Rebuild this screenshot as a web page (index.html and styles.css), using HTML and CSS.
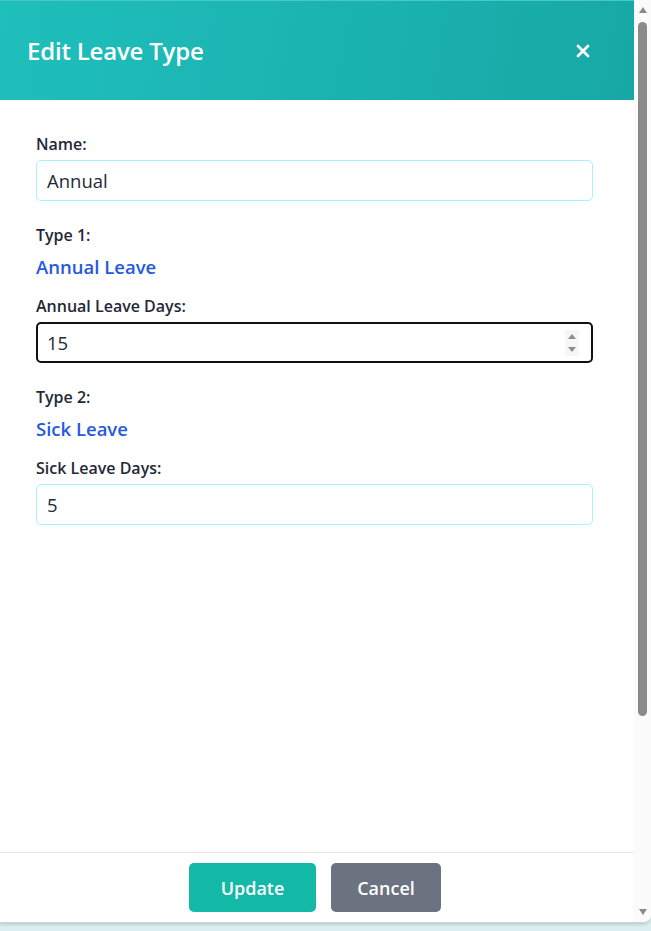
FILE: index.html
```html
<!DOCTYPE html>
<html lang="en">
<head>
<meta charset="utf-8">
<title>Edit Leave Type</title>
<link rel="stylesheet" href="styles.css">
</head>
<body>
<div class="modal">
  <div class="modal-main">
    <div class="modal-header">
      <h2 class="modal-title">Edit Leave Type</h2>
      <button class="close-btn" aria-label="Close">
        <svg width="14" height="14" viewBox="0 0 14 14"><path d="M2 2 L12 12 M12 2 L2 12" stroke="#fff" stroke-width="2.8" stroke-linecap="round"/></svg>
      </button>
    </div>
    <div class="modal-body">
      <div class="group">
        <label class="label">Name:</label>
        <input class="input" type="text" value="Annual">
      </div>
      <div class="group">
        <div class="label label-type">Type 1:</div>
        <div class="type-name">Annual Leave</div>
        <label class="label">Annual Leave Days:</label>
        <div class="input-wrap">
          <input class="input input-focused" type="text" value="15">
          <span class="spinner"><span class="tri-up"></span><span class="tri-down"></span></span>
        </div>
      </div>
      <div class="group">
        <div class="label label-type">Type 2:</div>
        <div class="type-name">Sick Leave</div>
        <label class="label">Sick Leave Days:</label>
        <input class="input" type="text" value="5">
      </div>
    </div>
    <div class="modal-footer">
      <button class="btn btn-update">Update</button>
      <button class="btn btn-cancel">Cancel</button>
    </div>
  </div>
  <div class="scrollbar" aria-hidden="true">
    <div class="sb-btn"><span class="sb-up"></span></div>
    <div class="sb-thumb"></div>
    <div class="sb-track"></div>
    <div class="sb-btn sb-btn-down"><span class="sb-down"></span></div>
  </div>
</div>
</body>
</html>
```

FILE: styles.css
```css
html, body {
  margin: 0;
  padding: 0;
}
body {
  background: #d9eff0;
  height: 931px;
  overflow: hidden;
  font-family: "Open Sans", "Noto Sans", sans-serif;
}
.modal {
  width: 651px;
  height: 923px;
  box-sizing: border-box;
  background: #fff;
  display: flex;
  overflow: hidden;
  border-bottom: 1px solid #d0d0d0;
  border-bottom-right-radius: 8px;
  box-shadow: 0 2px 3px rgba(0,0,0,0.12);
}
.modal-main {
  flex: 1;
  display: flex;
  flex-direction: column;
  min-width: 0;
}
.modal-header {
  height: 100px;
  flex: none;
  box-sizing: border-box;
  display: flex;
  align-items: center;
  justify-content: space-between;
  padding: 0 42px 0 27px;
  background: linear-gradient(100deg, #1fbfbc 0%, #17a8a5 100%);
  border-top: 1px solid #45c9c6;
}
.modal-title {
  margin: 0;
  color: #fff;
  font-size: 24px;
  font-weight: 600;
  letter-spacing: -0.2px;
}
.close-btn {
  background: none;
  border: 0;
  padding: 2px;
  display: flex;
  cursor: pointer;
}
.modal-body {
  flex: 1;
  box-sizing: border-box;
  padding: 32px 41px 0 36px;
}
.group + .group {
  margin-top: 22px;
}
.label {
  display: block;
  font-size: 16px;
  line-height: 24px;
  font-weight: 600;
  color: #1f2937;
  margin-bottom: 4px;
}
.label-type {
  margin-bottom: 6px;
}
.type-name {
  font-size: 18.5px;
  line-height: 28px;
  font-weight: 600;
  color: #2459e0;
  margin-bottom: 13px;
}
.input-wrap {
  position: relative;
}
.input {
  display: block;
  width: 100%;
  height: 41px;
  box-sizing: border-box;
  border: 1px solid #a5f3fc;
  border-radius: 5px;
  padding: 0 10px;
  font-family: inherit;
  font-size: 18.5px;
  color: #1f2937;
  background: #fff;
  outline: none;
}
.input-focused {
  border: 2px solid #111;
  padding: 0 9px;
}
.spinner {
  position: absolute;
  right: 14px;
  top: 8px;
  width: 14px;
  height: 26px;
  background: #f6f6f6;
  display: flex;
  flex-direction: column;
  align-items: center;
  justify-content: center;
  gap: 8px;
}
.tri-up, .tri-down {
  width: 0;
  height: 0;
  border-left: 4px solid transparent;
  border-right: 4px solid transparent;
}
.tri-up {
  border-bottom: 5px solid #8e8e8e;
}
.tri-down {
  border-top: 5px solid #8e8e8e;
}
.modal-footer {
  flex: none;
  height: 70px;
  box-sizing: border-box;
  background: #fff;
  border-top: 1px solid #e5e7eb;
  display: flex;
  justify-content: center;
  align-items: flex-start;
  gap: 15px;
  padding: 10px 4px 0 0;
}
.btn {
  height: 49px;
  border: 0;
  border-radius: 5px;
  color: #fff;
  font-family: inherit;
  font-size: 18px;
  font-weight: 600;
  cursor: pointer;
}
.btn-update {
  background: #14b8a6;
  width: 127px;
}
.btn-cancel {
  background: #6b7280;
  width: 110px;
}
.scrollbar {
  width: 17px;
  flex: none;
  background: #fbfbfb;
  display: flex;
  flex-direction: column;
  align-items: center;
}
.sb-btn {
  height: 20px;
  width: 17px;
  display: flex;
  justify-content: center;
  align-items: center;
}
.sb-up, .sb-down {
  width: 0;
  height: 0;
  border-left: 4px solid transparent;
  border-right: 4px solid transparent;
}
.sb-up {
  border-bottom: 6px solid #8a8a8a;
}
.sb-down {
  border-top: 6px solid #8a8a8a;
}
.sb-thumb {
  width: 9px;
  height: 694px;
  margin-top: 2px;
  border-radius: 5px;
  background: #8a8a8a;
}
.sb-track {
  flex: 1;
}
```
